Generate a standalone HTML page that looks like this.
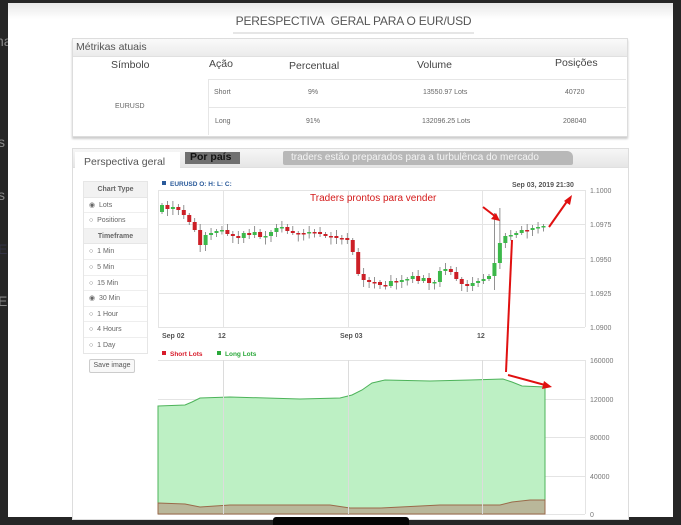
<!DOCTYPE html>
<html><head><meta charset="utf-8"><style>
*{margin:0;padding:0;box-sizing:border-box}
body{width:681px;height:525px;background:#262626;position:relative;overflow:hidden;font-family:"Liberation Sans",sans-serif}
.abs{position:absolute}
#page{left:8px;top:3px;width:665px;height:514px;background:#fff}
.t{position:absolute;white-space:nowrap}
</style></head><body>
<div class="abs" style="left:0;top:30px;color:#888;font-size:14px;line-height:14px">
<div class="t" style="top:4px;left:-4px">na</div>
<div class="t" style="top:105px;left:-2px">s</div>
<div class="t" style="top:158px;left:-2px">s</div>
<div class="t" style="top:212px;left:-2px;color:#334">E</div>
<div class="t" style="top:264px;left:-2px">E</div>
</div>
<div id="page" class="abs">
<div class="abs" style="left:0;top:0;width:665px;height:16px;background:linear-gradient(#e8e8e8,#fff)"></div>
</div>
<!-- title -->
<div class="abs" style="left:233px;top:10px;width:241px;height:24px;border-bottom:2px solid #e6e6e6;text-align:center;font-size:12px;color:#555;line-height:22px;white-space:nowrap;letter-spacing:-0.2px">PERESPECTIVA&nbsp; GERAL PARA O EUR/USD</div>
<!-- metrics -->
<div class="abs" style="left:72px;top:38px;width:556px;height:99px;border:1px solid #ddd;box-shadow:0 2px 2px #ccc;background:#fff">
<div style="height:18px;background:linear-gradient(#fafafa,#ebebeb);border-bottom:1px solid #e0e0e0;font-size:10.5px;color:#555;line-height:16px;padding-left:3px">Métrikas atuais</div>
<div class="t" style="left:38px;top:20px;font-size:10.5px;color:#444">Símbolo</div>
<div class="t" style="left:136px;top:19px;font-size:10.5px;color:#444">Ação</div>
<div class="t" style="left:216px;top:21px;font-size:10.5px;color:#444">Percentual</div>
<div class="t" style="left:344px;top:20px;font-size:10.5px;color:#444">Volume</div>
<div class="t" style="left:482px;top:18px;font-size:10.5px;color:#444">Posições</div>
<div class="abs" style="left:135px;top:40px;width:418px;height:1px;background:#e6e6e6"></div>
<div class="abs" style="left:135px;top:68px;width:418px;height:1px;background:#e6e6e6"></div>
<div class="abs" style="left:135px;top:40px;width:1px;height:56px;background:#e6e6e6"></div>
<div class="t" style="left:42px;top:64px;font-size:7px;color:#666">EURUSD</div>
<div class="t" style="left:141px;top:50px;font-size:7px;color:#666">Short</div>
<div class="t" style="left:235px;top:50px;font-size:7px;color:#666">9%</div>
<div class="t" style="left:350px;top:50px;font-size:7px;color:#666">13550.97 Lots</div>
<div class="t" style="left:492px;top:50px;font-size:7px;color:#666">40720</div>
<div class="t" style="left:142px;top:79px;font-size:7px;color:#666">Long</div>
<div class="t" style="left:233px;top:79px;font-size:7px;color:#666">91%</div>
<div class="t" style="left:349px;top:79px;font-size:7px;color:#666">132096.25 Lots</div>
<div class="t" style="left:490px;top:79px;font-size:7px;color:#666">208040</div>
</div>
<!-- second panel -->
<div class="abs" style="left:72px;top:148px;width:557px;height:372px;border:1px solid #ddd;background:#fff">
<div style="height:19px;background:linear-gradient(#f6f6f6,#e6e6e6);border-bottom:1px solid #e0e0e0"></div>
<div class="abs" style="left:2px;top:3px;width:105px;height:18px;background:#fff;font-size:10.5px;color:#555;padding:4px 0 0 9px">Perspectiva geral</div>
<div class="abs" style="left:112px;top:3px;width:55px;height:12px;background:#707070;font-size:10.5px;color:#111;line-height:11px;padding-left:5px;font-weight:bold">Por país</div>
<div class="abs" style="left:210px;top:2px;width:290px;height:14px;background:#b8b8b8;border-radius:2px 6px 2px 2px"></div>
<div class="t" style="left:218px;top:3px;font-size:10px;color:#f4f4f4">traders estão preparados para a turbulênca do mercado</div>
<!-- sidebar -->
<div class="abs" style="left:10px;top:32px;width:65px;height:173px;border:1px solid #e6e6e6;font-size:7px;color:#666">
<div style="height:15.6px;background:#f2f2f2;text-align:center;line-height:15px;font-weight:bold;border-bottom:1px solid #e6e6e6">Chart Type</div>
<div style="height:15.6px;line-height:15px;padding-left:5px;border-bottom:1px solid #eee">◉&nbsp; Lots</div>
<div style="height:15.6px;line-height:15px;padding-left:5px;border-bottom:1px solid #eee">○&nbsp; Positions</div>
<div style="height:15.6px;background:#f2f2f2;text-align:center;line-height:15px;font-weight:bold;border-bottom:1px solid #e6e6e6">Timeframe</div>
<div style="height:15.6px;line-height:15px;padding-left:5px;border-bottom:1px solid #eee">○&nbsp; 1 Min</div>
<div style="height:15.6px;line-height:15px;padding-left:5px;border-bottom:1px solid #eee">○&nbsp; 5 Min</div>
<div style="height:15.6px;line-height:15px;padding-left:5px;border-bottom:1px solid #eee">○&nbsp; 15 Min</div>
<div style="height:15.6px;line-height:15px;padding-left:5px;border-bottom:1px solid #eee">◉&nbsp; 30 Min</div>
<div style="height:15.6px;line-height:15px;padding-left:5px;border-bottom:1px solid #eee">○&nbsp; 1 Hour</div>
<div style="height:15.6px;line-height:15px;padding-left:5px;border-bottom:1px solid #eee">○&nbsp; 4 Hours</div>
<div style="height:15.6px;line-height:15px;padding-left:5px">○&nbsp; 1 Day</div>
</div>
<div class="abs" style="left:16px;top:210px;width:46px;height:14px;border:1px solid #ccc;border-radius:2px;background:#f8f8f8;font-size:7px;color:#555;text-align:center;line-height:12px">Save image</div>
</div>
<svg class="abs" style="left:0;top:0" width="681" height="525" font-family="Liberation Sans, sans-serif">
<g stroke="#e4e4e4" stroke-width="1">
<line x1="158" y1="190.5" x2="585" y2="190.5"/><line x1="158" y1="224.5" x2="585" y2="224.5"/><line x1="158" y1="258.5" x2="585" y2="258.5"/><line x1="158" y1="293.5" x2="585" y2="293.5"/><line x1="158" y1="327.5" x2="585" y2="327.5"/>
<line x1="585.5" y1="190" x2="585.5" y2="327"/><line x1="158.5" y1="190" x2="158.5" y2="327"/>
<line x1="223.5" y1="190" x2="223.5" y2="327"/><line x1="348.5" y1="190" x2="348.5" y2="327"/><line x1="482.5" y1="190" x2="482.5" y2="327"/>
<line x1="158" y1="360.5" x2="585" y2="360.5"/><line x1="158" y1="399.5" x2="585" y2="399.5"/><line x1="158" y1="437.5" x2="585" y2="437.5"/><line x1="158" y1="476.5" x2="585" y2="476.5"/><line x1="158" y1="514.5" x2="585" y2="514.5"/>
<line x1="585.5" y1="360" x2="585.5" y2="514"/>
</g>
<path d="M158,406 L185,405 L192,402 L200,398 L230,397 L300,399 L340,398 L352,395 L362,390 L372,383 L385,380 L430,381 L470,380 L503,379 L512,382 L522,386 L545,387 L545,514 L158,514Z" fill="#bdf0c4" stroke="#4db35a" stroke-width="1"/>
<path d="M158,503 L185,504 L200,507 L230,505 L330,505 L350,508 L380,508 L440,505 L500,505 L512,502 L530,500 L545,500 L545,514 L158,514Z" fill="#b9b79a" stroke="#9a6a4a" stroke-width="1"/>
<g stroke="#dcdcdc"><line x1="223.5" y1="360" x2="223.5" y2="514"/><line x1="348.5" y1="360" x2="348.5" y2="514"/><line x1="482.5" y1="360" x2="482.5" y2="514"/></g>
<g id="c"></g>
<g font-size="7" fill="#777">
<text x="590" y="193">1.1000</text><text x="590" y="227">1.0975</text><text x="590" y="262">1.0950</text><text x="590" y="296">1.0925</text><text x="590" y="330">1.0900</text>
<text x="590" y="363">160000</text><text x="590" y="402">120000</text><text x="590" y="440">80000</text><text x="590" y="479">40000</text><text x="590" y="517">0</text>
</g>
<g font-size="7" fill="#555" font-weight="bold">
<text x="162" y="338">Sep 02</text><text x="218" y="338">12</text><text x="340" y="338">Sep 03</text><text x="477" y="338">12</text>
<text x="512" y="187">Sep 03, 2019 21:30</text>
</g>
<rect x="162" y="181" width="4" height="4" fill="#2a5a9a"/>
<text x="170" y="186" font-size="6.5" fill="#2a5a9a" font-weight="bold">EURUSD O: H: L: C:</text>
<rect x="162" y="351" width="4" height="4" fill="#d81b2a"/><text x="170" y="356" font-size="6.5" fill="#d81b2a" font-weight="bold">Short Lots</text>
<rect x="217" y="351" width="4" height="4" fill="#2aa83a"/><text x="225" y="356" font-size="6.5" fill="#2aa83a" font-weight="bold">Long Lots</text>
<text x="310" y="201" font-size="10" fill="#d41a1a">Traders prontos para vender</text>
<g stroke="#e01010" stroke-width="2" fill="#e01010">
<line x1="483" y1="207" x2="496" y2="217"/><path d="M500,221 L491,219 L496,213Z" stroke="none"/>
<line x1="549" y1="227" x2="568" y2="200"/><path d="M572,195 L570,205 L564,201Z" stroke="none"/>
<line x1="512" y1="240" x2="506" y2="372"/>
<line x1="508" y1="375" x2="545" y2="385"/><path d="M552,387 L542,389 L544,381Z" stroke="none"/>
</g>
</svg>
<div class="abs" style="left:273px;top:517px;width:136px;height:8px;background:#050505;border-radius:3px 3px 0 0"></div>
<script>
var cl=[205,209,207,210,215,222,230,245,235,233,231,230,234,236,238,233,235,232,237,236,232,228,227,231,233,233,233,232,232,234,236,236,238,238,240,252,274,280,282,282,285,286,281,282,280,279,276,281,278,283,282,271,269,272,279,284,286,283,281,279,276,263,243,236,235,233,230,230,228,227,226];
var s='',o=212;
for(var i=0;i<cl.length;i++){var x=160+i*5.45,c=cl[i],g=c<o,col=g?'#3cb84a':'#cc1f26',t=Math.min(o,c),b=Math.max(o,c);if(b-t<1.5){b=t+1.5;}
var h=t-2-(i*7%5),l=b+2+(i*11%6);if(i==61){h=213;l=290;}if(i==62){h=208;}
s+='<line x1="'+(x+2)+'" y1="'+h+'" x2="'+(x+2)+'" y2="'+l+'" stroke="#777" stroke-width="0.8"/><rect x="'+x+'" y="'+t+'" width="4" height="'+(b-t)+'" fill="'+col+'"/>';o=c;}
document.getElementById('c').innerHTML=s;
</script>
</body></html>
